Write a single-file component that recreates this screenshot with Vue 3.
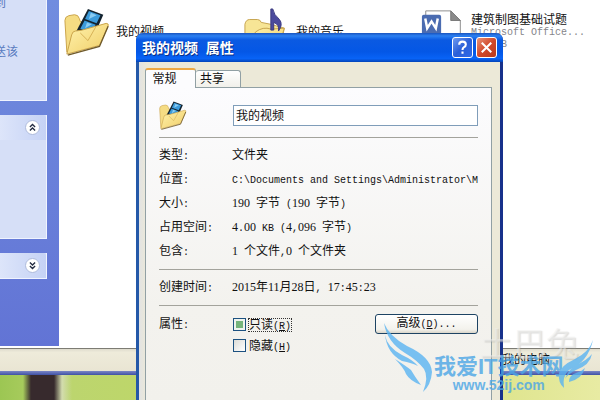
<script setup>
import { ref } from 'vue'

const folderName = ref('我的视频')
const readOnly = ref(true)
const hidden = ref(false)

const details = [
  { label: '类型:', value: '文件夹' },
  { label: '位置:', value: 'C:\\Documents and Settings\\Administrator\\M' },
  { label: '大小:', value: '190 字节 (190 字节)' },
  { label: '占用空间:', value: '4.00 KB (4,096 字节)' },
  { label: '包含:', value: '1 个文件,0 个文件夹' },
]
const created = [
  { label: '创建时间:', value: '2015年11月28日, 17:45:23' },
]
const groups = [details, created]

// split a string into digit, latin and chinese runs, digits and latin are half width
const runs = (text) => {
  return text.match(/[0-9]+|[\x20-\x2f\x3a-\x7e]+|[^\x20-\x7e]+/g).map((part) => ({
    part,
    digit: /^[0-9]/.test(part),
    latin: /^[\x20-\x2f\x3a-\x7e]/.test(part),
  }))
}
</script>

<template>
  <div class="desktop">
    <svg width="0" height="0" class="defs" aria-hidden="true">
      <defs>
        <linearGradient id="paper" x1="0" y1="0" x2="1" y2="1">
          <stop offset="0" stop-color="#fff3ae" />
          <stop offset="1" stop-color="#f0cd66" />
        </linearGradient>
        <symbol id="video-folder" viewBox="0 0 48 50">
          <path d="M3 46 L1 13 Q1 9 5 8 L11 7 Q15 7 16 11 L17 14 L28 16 L34 20 L30 36 Z" fill="#f5dc83" stroke="#c9a248" />
          <path d="M25 1 L41 7 L31 30 L13 24 Z" fill="#13232f" />
          <path d="M26 3 L38 7.500 L34 16 L22 11.500 Z" fill="#3c9bdb" />
          <path d="M21.500 13 L33 17.500 L29 26 L17 21.500 Z" fill="#3c9bdb" />
          <path d="M28 5 L34 7.500 L26 11.500 Z M24 15 L29 17 L22 21 Z" fill="#8accf2" />
          <path d="M3 48 L8 28 Q9 24 12 24 L19 23 L44 16 Q47 16 46 19 L37 39 Z" fill="url(#paper)" stroke="#c9a248" />
          <path d="M17 26 L25 34 L33 20" fill="none" stroke="#d5b055" />
          <path d="M4 49 L37 40 L46 19" fill="none" stroke="#6f5a2b" stroke-width="1.400" />
        </symbol>
      </defs>
    </svg>

    <div class="explorer">
      <aside class="sidebar">
        <section class="card tasks">
          <a href="#">到</a>
          <a href="#">送该</a>
        </section>
        <section class="card places">
          <header>
            <button type="button" class="round" aria-label="收起">
              <svg viewBox="0 0 15 15"><path d="M4.500 7 L7.500 4 L10.500 7 M4.500 11 L7.500 8 L10.500 11" /></svg>
            </button>
          </header>
        </section>
        <section class="card closed">
          <header>
            <button type="button" class="round" aria-label="展开">
              <svg viewBox="0 0 15 15"><path d="M4.500 4 L7.500 7 L10.500 4 M4.500 8 L7.500 11 L10.500 8" /></svg>
            </button>
          </header>
        </section>
      </aside>
      <main class="files">
        <div class="file">
          <svg class="file-icon"><use href="#video-folder" /></svg>
          <span>我的视频</span>
        </div>
        <div class="file">
          <svg class="file-icon" viewBox="0 0 48 50">
            <path d="M1 48 L1 17 Q2 12 6 12 L14 12 Q17 12 18 15 L28 17 L42 21 L38 42 Z" fill="#f7e596" stroke="#c4a24c" />
            <path d="M3 48 L12 25 Q20 19 28 22 L42 21 L36 42 Z" fill="url(#paper)" stroke="#c4a24c" />
            <path d="M28 1 L30 1 Q31 7 37 12 Q41 17 36 24 Q37 17 31 15 L31 23 L28 23 Z" fill="#4b4a9d" stroke="#3b3a80" />
          </svg>
          <span>我的音乐</span>
        </div>
        <div class="file doc">
          <svg class="file-icon" viewBox="0 0 48 50">
            <path d="M5 3 H31 L41 13 V48 H5 Z" fill="#fff" stroke="#8b8b8b" />
            <path d="M31 3 V13 H41 Z" fill="#8a8a8a" stroke="#777" />
            <rect x="1" y="7" width="20" height="23" rx="2" fill="#4b6cb1" />
            <path d="M4.500 11 L6.500 21 L11 14 L15.500 21 L17.500 11" fill="none" stroke="#fff" stroke-width="2.600" />
          </svg>
          <div class="doc-text">
            <span>建筑制图基础试题</span>
            <span class="latin type">Microsoft Office...</span>
            <span class="latin size">103 KB</span>
          </div>
        </div>
      </main>
    </div>
    <footer class="statusbar"><span>我的电脑</span></footer>
    <div class="frame"></div>
    <div class="wallpaper"></div>

    <div class="stamp" aria-hidden="true">土巴兔</div>

    <form class="dialog" @submit.prevent>
      <header class="titlebar">
        <h1>我的视频&nbsp; 属性</h1>
        <button type="button" class="help" aria-label="帮助">
          <svg viewBox="0 0 20 20"><path d="M6.500 7 Q6.500 3.800 10 3.800 Q13.500 3.800 13.500 6.800 Q13.500 8.600 11.600 9.600 Q10 10.500 10 12.500 M10 14.300 V16.500" /></svg>
        </button>
        <button type="button" class="close" aria-label="关闭">
          <svg viewBox="0 0 20 20"><path d="M5 5 L15 15 M15 5 L5 15" /></svg>
        </button>
      </header>
      <nav class="tabs">
        <button type="button" class="tab active">常规</button>
        <button type="button" class="tab">共享</button>
      </nav>
      <div class="panel">
        <div class="name-row">
          <svg class="small-icon"><use href="#video-folder" /></svg>
          <input v-model="folderName" type="text" aria-label="名称">
        </div>
        <template v-for="(group, index) in groups" :key="index">
          <hr>
          <dl>
            <template v-for="row in group" :key="row.label">
              <dt><span v-for="(r, i) in runs(row.label)" :key="i" :class="{ latin: r.latin, digit: r.digit }">{{ r.part }}</span></dt>
              <dd><span v-for="(r, i) in runs(row.value)" :key="i" :class="{ latin: r.latin, digit: r.digit }">{{ r.part }}</span></dd>
            </template>
          </dl>
        </template>
        <hr>
        <div class="attributes">
          <span>属性<span class="latin">:</span></span>
          <div class="checks">
            <label class="check focus">
              <input v-model="readOnly" type="checkbox">
              <span>只读<span class="latin">(<u>R</u>)</span></span>
            </label>
            <label class="check">
              <input v-model="hidden" type="checkbox">
              <span>隐藏<span class="latin">(<u>H</u>)</span></span>
            </label>
          </div>
          <button type="button" class="advanced">高级<span class="latin">(<u>D</u>)...</span></button>
        </div>
      </div>
    </form>

    <div class="watermark">
      <svg class="wing" viewBox="0 0 50 70">
        <path d="M0 0 Q5 13 23 23 Q47 34 48 49 Q47 62 39 69 Q45 54 40 46 Q33 37 21 30 Q3 19 0 0 Z" />
        <path d="M1 12 Q3 24 18 32 Q29 37 34 43 Q28 40 18 38 Q3 30 1 12 Z" />
        <path d="M11 36 Q22 43 27 47 Q31 54 37 62 Q26 58 22 51 Q20 45 11 36 Z" />
      </svg>
      <div class="brand">
        <strong>我爱IT技术网</strong>
        <b>www.52ij.com</b>
      </div>
      <svg class="wing right" viewBox="0 0 38 50">
        <path d="M37 0 Q33 12 19 19 Q4 26 3 34 Q2 43 8 48 Q6 36 13 30 Q32 22 37 0 Z" />
        <path d="M36 14 Q34 25 20 30 Q12 34 9 39 Q13 28 22 24 Q31 20 36 14 Z" />
        <path d="M29 28 Q26 39 13 42 Q13 35 20 33 Q25 32 29 28 Z" />
      </svg>
    </div>
  </div>
</template>

<style>
body {
  margin: 0;
  font-family: "Liberation Sans", "Noto Sans CJK SC", sans-serif;
}
</style>

<style scoped>
.desktop {
  position: relative;
  display: grid;
  grid-template-rows: 1fr 22px 4px 25px;
  height: 100vh;
  overflow: hidden;
  font-size: 12px;
  line-height: 14px;
  color: #111;
}

.defs {
  position: absolute;
}

button,
input {
  font-family: inherit;
  font-size: 12px;
  color: #111;
  margin: 0;
  padding: 0;
  box-sizing: border-box;
}

.latin {
  font-family: "Liberation Mono", monospace;
  font-size: 10px;
}

.digit {
  font-family: "Liberation Serif", serif;
}

/* explorer window */
.explorer {
  display: flex;
  min-height: 0;
  background: #fff;
  border-bottom: 1px solid #7d7c74;
}

.sidebar {
  display: flex;
  flex-direction: column;
  gap: 14px;
  width: 59px;
  flex-shrink: 0;
  box-sizing: border-box;
  padding-right: 12px;
  margin-bottom: 2px;
  background: linear-gradient(#718ddf, #6274d5);
}

.card {
  background: #d6dff7;
  border: 1px solid #f0f4ff;
  border-width: 0 1px 1px 0;
  box-sizing: border-box;
}

.tasks {
  display: flex;
  flex-direction: column;
  gap: 39px;
  height: 101px;
}

.tasks a {
  color: #5a7cc0;
  text-decoration: none;
  margin: -4px 0 0 -6px;
}

.places {
  height: 124px;
}

.card header {
  display: flex;
  justify-content: flex-end;
  align-items: center;
  height: 25px;
  padding-right: 6px;
  background: linear-gradient(90deg, #dde5fa, #c5d2f5);
  border-radius: 0 3px 0 0;
}

.round {
  width: 15px;
  height: 15px;
  border: 1px solid #aebbdc;
  border-radius: 50%;
  background: #fff;
}

.round svg {
  display: block;
  width: 13px;
  height: 13px;
}

.round path {
  fill: none;
  stroke: #222a40;
  stroke-width: 1.5;
}

.files {
  flex: 1;
  display: grid;
  grid-template-columns: 180px 177px 1fr;
  align-items: start;
  padding: 8px 0 0 4px;
}

.file {
  display: flex;
  align-items: center;
  gap: 5px;
  white-space: nowrap;
}

.file-icon {
  width: 48px;
  height: 48px;
  flex-shrink: 0;
}

.doc-text {
  display: flex;
  flex-direction: column;
  margin-left: -2px;
}

.type,
.size {
  color: #85858a;
  line-height: 12px;
}

.statusbar {
  display: flex;
  align-items: center;
  padding-left: 502px;
  background: linear-gradient(#dedbcd, #eeebda 15%, #e9e5d3);
  white-space: nowrap;
}

.frame {
  background: linear-gradient(#7a86c6, #3f51a5);
}

.wallpaper {
  background: linear-gradient(90deg, transparent 23px, #372a2d 31px, #372a2d 54px, #d3dcae 62px, transparent 72px) no-repeat,
    linear-gradient(90deg, #9cc653, #bcd56e 12%, #c0d864 40%, #dfe58f 84%, #e8eba3);
}

/* properties dialog */
.dialog {
  position: absolute;
  top: 33px;
  bottom: 0;
  left: 136px;
  display: flex;
  flex-direction: column;
  width: 367px;
  box-sizing: border-box;
  border: solid #17318b;
  border-width: 0 3px;
  border-left-color: #2458a8;
  border-radius: 7px 7px 0 0;
  background: linear-gradient(90deg, #e2e3e3, #ece9d8 8px);
}

.titlebar {
  display: flex;
  align-items: center;
  gap: 3px;
  height: 29px;
  flex-shrink: 0;
  box-sizing: border-box;
  margin: 0 -3px;
  padding: 0 6px;
  border-radius: 7px 7px 0 0;
  background: linear-gradient(#1a54be, #2b80f2 10%, #0b5ae2 24%, #0457e6 65%, #0863f6 88%, #0344b8);
}

.titlebar h1 {
  flex: 1;
  margin: 0;
  font-size: 14px;
  line-height: 20px;
  color: #fff;
  text-shadow: 1px 1px #0a2f86;
}

.titlebar button {
  width: 21px;
  height: 21px;
  border: 1px solid #fff;
  border-radius: 3px;
}

.titlebar svg {
  display: block;
  width: 19px;
  height: 19px;
}

.titlebar path {
  fill: none;
  stroke: #fff;
  stroke-width: 2.2;
}

.help {
  background: linear-gradient(135deg, #6f9bf0, #2a5fd8 50%, #2f6ae8);
}

.close {
  background: linear-gradient(135deg, #e79379, #d2492a 50%, #b93a1c);
}

.tabs {
  display: flex;
  align-items: flex-end;
  height: 25px;
  flex-shrink: 0;
  margin-left: 6px;
}

.tab {
  width: 45px;
  height: 17px;
  padding-right: 12px;
  border: 1px solid #91a0a4;
  border-bottom: 0;
  border-radius: 3px 3px 0 0;
  background: linear-gradient(#fff, #f1f0ea);
  line-height: 14px;
  white-space: nowrap;
}

.tab:not(.active) {
  border-left: 0;
}

.tab.active {
  position: relative;
  width: 51px;
  height: 20px;
  margin-bottom: -1px;
  border-top: 2px solid #eda843;
  background: #fcfcfe;
}

.panel {
  flex: 1;
  margin: 0 8px 0 6px;
  padding: 12px 13px 0;
  border: 1px solid #91a0a4;
  border-bottom: 0;
  background: linear-gradient(#fcfcfe, #f3f2ee 70%, #f2f1ec);
}

.name-row {
  display: grid;
  grid-template-columns: 74px 1fr;
  align-items: center;
  height: 31px;
}

.small-icon {
  width: 28px;
  height: 29px;
}

.name-row input {
  width: 100%;
  height: 21px;
  padding: 0 2px 2px;
  border: 1px solid #7f9db9;
  border-radius: 0;
  background: #fff;
}

hr {
  height: 1px;
  margin: 6px 0 5px;
  border: 0;
  background: #a3a39c;
}

dl {
  display: grid;
  grid-template-columns: 73px 1fr;
  margin: 0;
  line-height: 24px;
  white-space: pre;
}

dt,
dd {
  height: 24px;
  margin: 0;
}

.attributes {
  display: grid;
  grid-template-columns: 74px 1fr 103px;
  align-items: start;
  padding-top: 3px;
  line-height: 20px;
}

.checks {
  display: grid;
  grid-auto-rows: 21px;
  justify-items: start;
}

.check {
  display: flex;
  align-items: center;
  gap: 2px;
  line-height: 13px;
}

.check > span {
  border: 1px dotted transparent;
  height: 12px;
  line-height: 12px;
}

.check.focus > span {
  border-color: #333;
}

.check input {
  appearance: none;
  width: 13px;
  height: 13px;
  border: 1px solid #1c5180;
  background: linear-gradient(135deg, #dcdcd7, #fff);
}

.check input:checked {
  background: #75b47b;
  box-shadow: inset 0 0 0 2px #eef3ee;
}

.advanced {
  height: 20px;
  border: 1px solid #1d4363;
  border-radius: 3px;
  background: linear-gradient(#fff, #f3f2ec 80%, #d9d5c9);
  line-height: 16px;
}

/* overlays */
.stamp {
  position: absolute;
  left: 480px;
  top: 327px;
  z-index: 1;
  font-size: 33px;
  line-height: 36px;
  color: rgba(240, 240, 238, 0.5);
  text-shadow: 1px 1px 1px rgba(150, 150, 145, 0.3);
}

.watermark {
  position: absolute;
  left: 384px;
  top: 323px;
  z-index: 2;
  display: flex;
  align-items: flex-start;
  color: #4ba6e6;
  opacity: 0.8;
  pointer-events: none;
}

.wing {
  width: 50px;
  height: 70px;
  fill: #5ab4f2;
}

.wing.right {
  width: 38px;
  height: 50px;
  margin: 17px 0 0 -8px;
}

.brand {
  display: flex;
  flex-direction: column;
  align-items: center;
  margin-top: 33px;
  white-space: nowrap;
}

.brand strong {
  font-size: 22px;
  line-height: 22px;
}

.brand b {
  font-size: 14px;
  line-height: 14px;
}
</style>
